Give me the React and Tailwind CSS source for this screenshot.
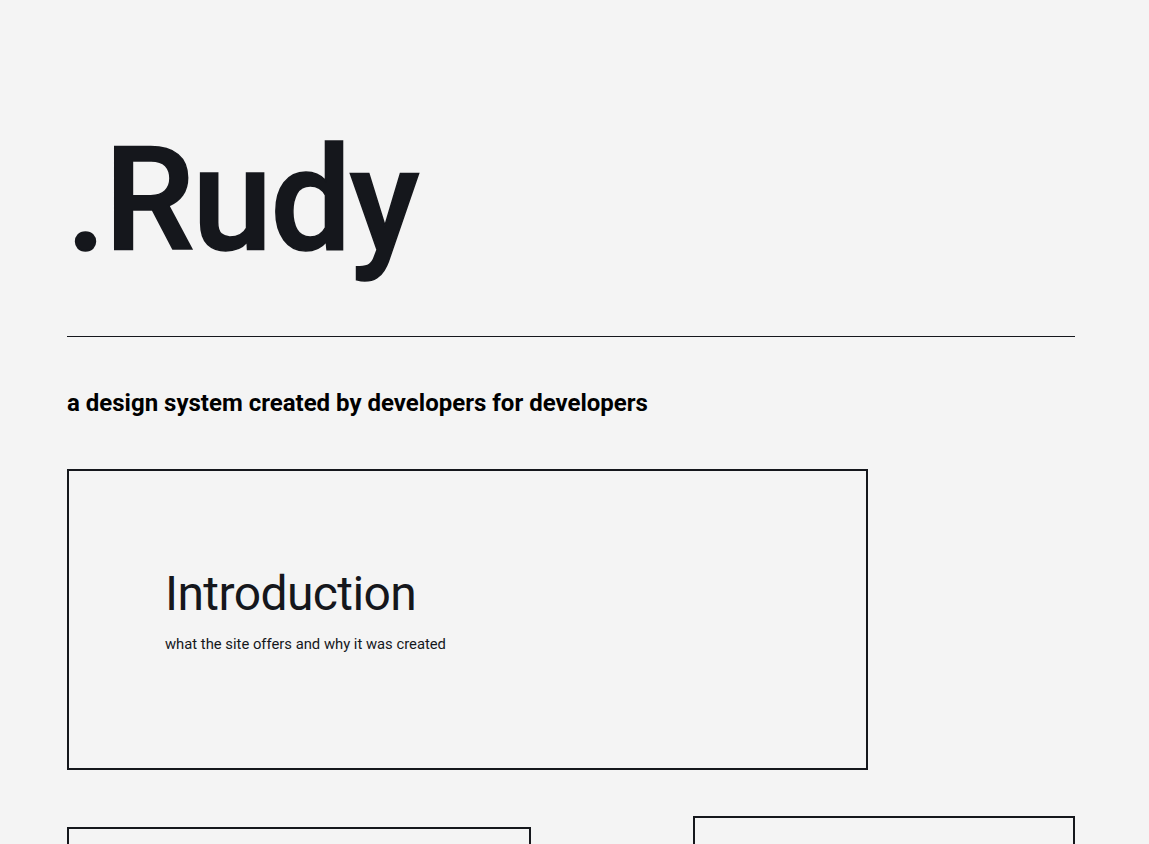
export default function App() {
  return (
    <div className="min-h-screen bg-[#f4f4f4] text-[#15171c] font-['Roboto',sans-serif] overflow-hidden">
      <div className="ml-[67px] w-[1008px] pt-[129px]">
        <h1 className="text-[144px] leading-none font-medium font-['Roboto_Medium','Roboto',sans-serif] tracking-[-2px] -ml-[1px] [-webkit-text-stroke:1.5px_#15171c]">
          .Rudy
        </h1>
        <hr className="mt-[63px] border-t border-[#15171c]" />
        <h2 className="mt-[50px] text-[24px] leading-[32px] font-bold text-black">
          a design system created by developers for developers
        </h2>
        <section className="mt-[50px] w-[801px] h-[301px] border-2 border-[#15171c] flex flex-col justify-center pl-[96px] pb-[20px]">
          <h3 className="text-[48px] leading-[56px] font-normal tracking-[-0.6px]">Introduction</h3>
          <p className="mt-[12px] text-[14.8px] leading-[20px] text-[#15171c]">
            what the site offers and why it was created
          </p>
        </section>
        <div className="flex justify-between items-start">
          <div className="mt-[57px] w-[464px] h-[200px] border-2 border-[#15171c]" />
          <div className="mt-[46px] w-[382px] h-[200px] border-2 border-[#15171c]" />
        </div>
      </div>
    </div>
  );
}
